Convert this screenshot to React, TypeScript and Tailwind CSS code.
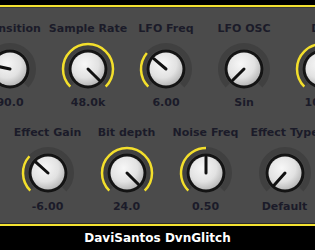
import React from 'react';

interface KnobProps {
  label: string;
  value: string;
  angle: number; // pointer angle, degrees from top, clockwise (-135..135)
  id: string;
}

const START = -135;
const END = 135;

// punto sul cerchio, angolo misurato dall'alto in senso orario
const pt = (cx: number, cy: number, r: number, deg: number) => {
  const rad = (deg * Math.PI) / 180;
  return [cx + r * Math.sin(rad), cy - r * Math.cos(rad)];
};

const arcPath = (cx: number, cy: number, r: number, a0: number, a1: number) => {
  const [x0, y0] = pt(cx, cy, r, a0);
  const [x1, y1] = pt(cx, cy, r, a1);
  const large = a1 - a0 > 180 ? 1 : 0;
  return `M ${x0} ${y0} A ${r} ${r} 0 ${large} 1 ${x1} ${y1}`;
};

const KnobDial: React.FC<{ angle: number; id: string }> = ({ angle, id }) => {
  const c = 28;
  const [px, py] = pt(c, c, 16, angle);
  return (
    <svg width="56" height="56" viewBox="0 0 56 56">
      <defs>
        <radialGradient id={id} cx="40%" cy="35%" r="70%">
          <stop offset="0%" stopColor="#f7f7f7" />
          <stop offset="60%" stopColor="#e2e2e2" />
          <stop offset="100%" stopColor="#b4b4b4" />
        </radialGradient>
      </defs>
      {/* traccia scura */}
      <path d={arcPath(c, c, 23, START, END)} stroke="#404040" strokeWidth="6" fill="none" />
      {/* arco del valore */}
      {angle > START + 1 && (
        <path d={arcPath(c, c, 25, START, angle)} stroke="#f3df2c" strokeWidth="2.5" fill="none" />
      )}
      <circle cx={c} cy={c} r="19.5" fill="#141414" />
      <circle cx={c} cy={c} r="16.5" fill={`url(#${id})`} />
      <line x1={c} y1={c} x2={px} y2={py} stroke="#111" strokeWidth="3" strokeLinecap="round" />
    </svg>
  );
};

const Knob: React.FC<KnobProps & { width: string }> = ({ label, value, angle, id, width }) => (
  <div className={`${width} shrink-0 flex flex-col items-center`}>
    <div className="h-[16px] leading-[16px] text-[11px] font-bold text-[#1b1b29] whitespace-nowrap">{label}</div>
    <div className="mt-[4px]">
      <KnobDial angle={angle} id={id} />
    </div>
    <div className="mt-[-2px] h-[16px] leading-[16px] text-[11px] font-bold text-[#1b1b29] whitespace-nowrap">{value}</div>
  </div>
);

const topRow: KnobProps[] = [
  { label: 'Transition', value: '90.0', angle: -78, id: 'k1' },
  { label: 'Sample Rate', value: '48.0k', angle: 135, id: 'k2' },
  { label: 'LFO Freq', value: '6.00', angle: -50, id: 'k3' },
  { label: 'LFO OSC', value: 'Sin', angle: -135, id: 'k4' },
  { label: 'Dry', value: '100.0', angle: 135, id: 'k5' },
];

const bottomRow: KnobProps[] = [
  { label: 'Effect Gain', value: '-6.00', angle: -48, id: 'k6' },
  { label: 'Bit depth', value: '24.0', angle: 135, id: 'k7' },
  { label: 'Noise Freq', value: '0.50', angle: 0, id: 'k8' },
  { label: 'Effect Type', value: 'Default', angle: -138, id: 'k9' },
];

export default function App() {
  return (
    <div
      className="w-[315px] h-[250px] overflow-hidden flex flex-col bg-black"
      style={{ fontFamily: '"DejaVu Sans", Verdana, sans-serif' }}
    >
      <div className="h-[5px] bg-black shrink-0" />
      <div className="h-[2px] bg-[#f3e231] shrink-0" />
      <div className="flex-1 bg-[#4b4b4b] pt-[13px] border-t border-[#3a3a3a]">
        <div className="flex ml-[-29px]">
          {topRow.map((k) => (
            <Knob key={k.id} {...k} width="w-[78px]" />
          ))}
        </div>
        <div className="flex ml-[8px] mt-[14px]">
          {bottomRow.map((k) => (
            <Knob key={k.id} {...k} width="w-[79px]" />
          ))}
        </div>
      </div>
      <div className="h-[1px] bg-[#2a2a2a] shrink-0" />
      <div className="h-[2px] bg-[#f3e231] shrink-0" />
      <div className="h-[24px] shrink-0 bg-black flex items-center justify-center text-white font-bold text-[12px]">
        DaviSantos DvnGlitch
      </div>
    </div>
  );
}
